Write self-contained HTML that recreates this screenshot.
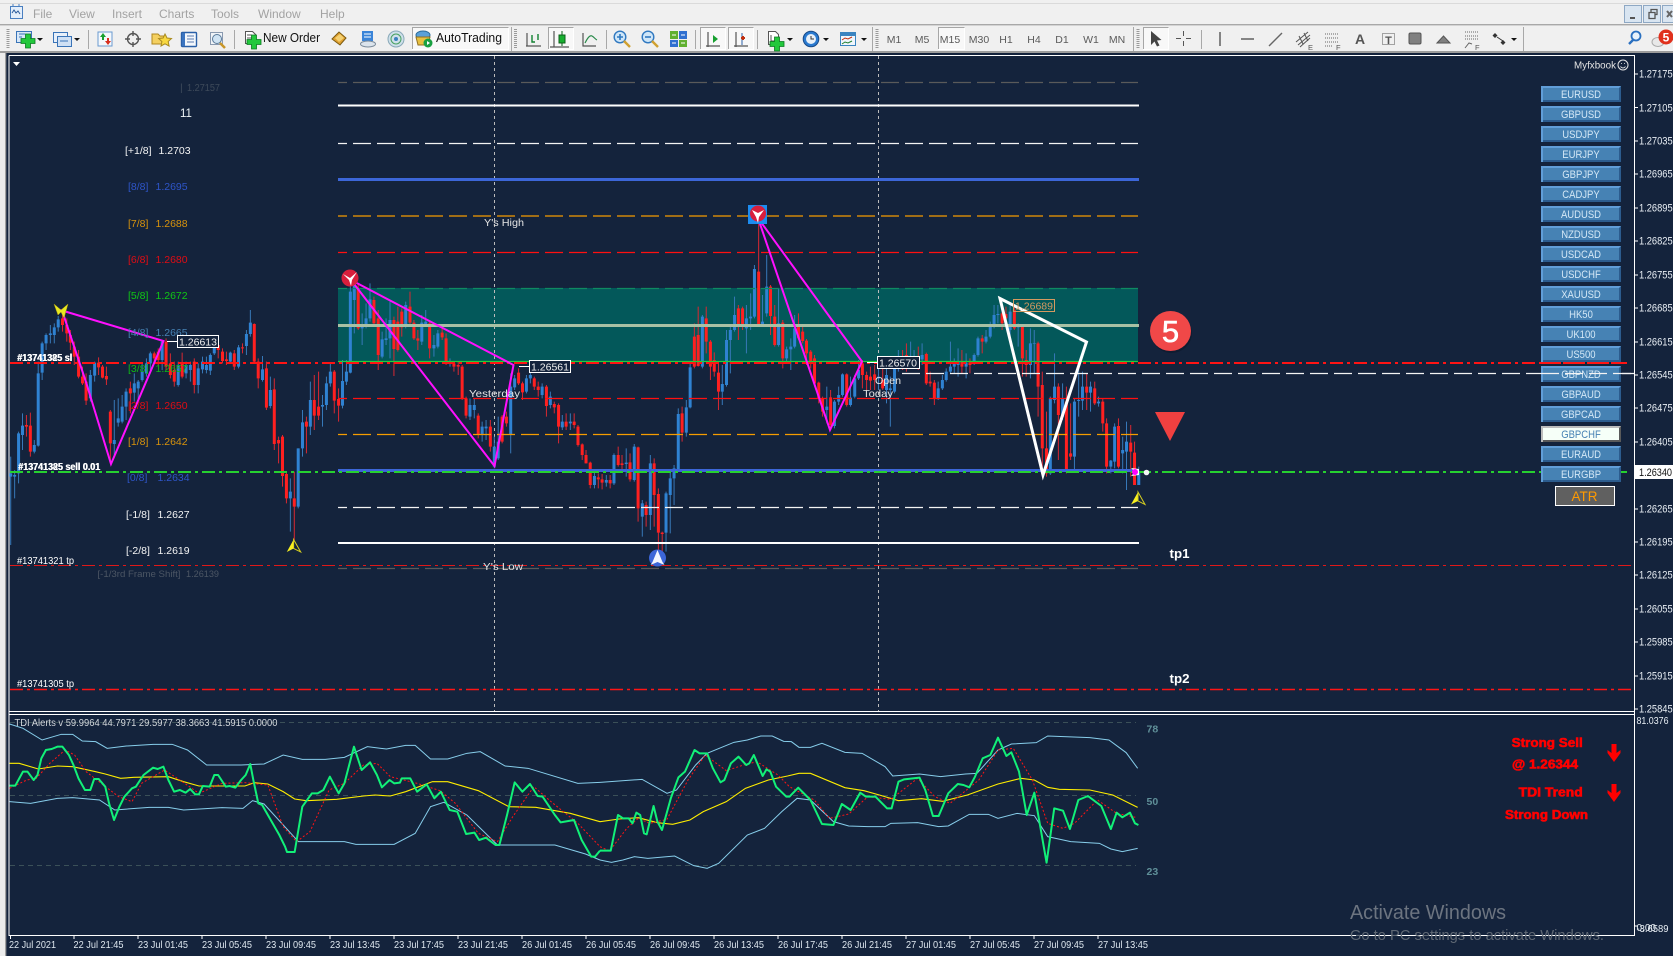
<!DOCTYPE html>
<html lang="en"><head><meta charset="utf-8"><title>MT4 chart</title>
<style>
html,body{margin:0;padding:0;background:#14233c;width:1673px;height:956px;overflow:hidden}
svg{display:block;font-family:"Liberation Sans",sans-serif}
path,polyline,line{vector-effect:non-scaling-stroke}
.lv{font-size:10.5px}
.px{font-size:10.6px;fill:#e8eef4}
.bt{font-size:10.8px;fill:#d4e8f6;text-anchor:middle}
.tm{font-size:10.5px;fill:#dfe8f0}
.tf{font-size:10.5px;fill:#5a5a5a;text-anchor:middle}
.mn{font-size:12px;fill:#a2a2a2}
.ch{font-size:10.5px;fill:#e4e4e4}
.rd{font-size:12.5px;font-weight:bold;fill:#ff0000;stroke:#ff0000;stroke-width:.6}
</style></head><body>
<svg width="1673" height="956" viewBox="0 0 1673 956" xmlns="http://www.w3.org/2000/svg">
<defs>
<g id="btn"><rect x="1541" y="86" width="80" height="16" fill="#2c5c8e"/><path d="M1541 86H1621L1619 88H1543V102L1541 102Z" fill="#619ed8"/><rect x="1543" y="88" width="76" height="12" fill="#4682b4"/></g>
<g id="plus"><path d="M-2.5-7H2.5V-2.5H7V2.5H2.5V7H-2.5V2.5H-7V-2.5H-2.5Z" fill="#22c83c" stroke="#0a7a20" stroke-width=".8"/></g>
<path id="dn" d="M0 0L6 0L3 3Z" fill="#111"/>
</defs>
<rect width="1673" height="956" fill="#14233c"/>

<!-- window chrome -->
<rect width="1673" height="53" fill="#f0f0f0"/>
<rect y="3" width="1673" height="1" fill="#dadada"/>
<rect y="24" width="1673" height="1.4" fill="#a8a8a8"/>
<rect y="51" width="1673" height="2" fill="#9c9c9c"/>
<rect x="0" y="53" width="5" height="903" fill="#ececec"/>
<rect x="5" y="53" width="1.4" height="903" fill="#a0a0a0"/>

<g fill="none" stroke="#4a7fc0"><rect x="10.500" y="6.500" width="12" height="12" fill="#e4eefa"/><path d="M12 13l2-3 2 3 2-2 2 3" stroke="#2a5a9a"/><path d="M13 6V4M19 6V4"/></g>
<text class="mn" x="33" y="18">File</text><text class="mn" x="69" y="18">View</text><text class="mn" x="112" y="18">Insert</text><text class="mn" x="159" y="18">Charts</text><text class="mn" x="211" y="18">Tools</text><text class="mn" x="258" y="18">Window</text><text class="mn" x="320" y="18">Help</text>

<!-- window buttons -->
<g fill="#d9e5f1" stroke="#8ea8c4"><rect x="1624.500" y="5.500" width="17" height="17"/><rect x="1643.500" y="5.500" width="17" height="17"/><rect x="1662.500" y="5.500" width="12" height="17"/></g>
<path d="M1630 18h5" stroke="#555" stroke-width="2"/>
<path d="M1649 12.500h6v6h-6zM1651 12v-2.500h6v5h-2" fill="none" stroke="#555" stroke-width="1.300"/>
<path d="M1667 11l5 6M1672 11l-5 6" stroke="#666" stroke-width="2"/>

<!-- toolbar -->
<g stroke="#a8a8a8" fill="none">
<path d="M88.500 30V49M234.500 30V49M511.500 27V51M606.500 30V49M695.500 30V49M757.500 30V49M872.500 27V51M1133.500 27V51M1201.500 30V49M1523.500 27V51"/>
</g>
<g stroke="#9a9a9a" stroke-dasharray="1 1" stroke-width="3" fill="none"><path d="M8 29V49M515.500 29V49M877 29V49M1138 29V49"/></g>
<!-- pressed boxes -->
<g fill="#f8f8f8" stroke="none"><rect x="412" y="27" width="97" height="23"/><rect x="548" y="27" width="26" height="23"/><rect x="700" y="27" width="26" height="23"/><rect x="728" y="27" width="26" height="23"/><rect x="938" y="27" width="27" height="23"/><rect x="1143" y="27" width="26" height="23"/></g>
<g fill="none" stroke="#a6a6a6"><path d="M412.500 49V27.500H508.500M548.500 49V27.500H573.500M700.500 49V27.500H725.500M728.500 49V27.500H753.500M938.500 49V27.500H964.500M1143.500 49V27.500H1168.500"/></g>
<g fill="none" stroke="#ffffff"><path d="M412.500 49.500H508.500V28M548.500 49.500H573.500V28M700.500 49.500H725.500V28M728.500 49.500H753.500V28M938.500 49.500H964.500V28M1143.500 49.500H1168.500V28"/></g>

<!-- icon: new chart -->
<rect x="16.500" y="31.500" width="15" height="11" fill="#d8e8f8" stroke="#3a74b8"/><path d="M19 34h6M19 37h3" stroke="#3a74b8"/><use href="#plus" x="28" y="41"/><use href="#dn" x="37" y="38"/>
<!-- profiles -->
<rect x="53.500" y="32.500" width="14" height="10" fill="#e8f0fa" stroke="#3a74b8"/><rect x="57.500" y="36.500" width="14" height="10" fill="#cfe0f4" stroke="#3a74b8"/><path d="M60 41h8" stroke="#3a74b8"/><use href="#dn" x="74" y="38"/>
<!-- market watch -->
<rect x="98" y="32" width="14" height="14" fill="#f4f8fc" stroke="#6a9ad0"/><path d="M103 33l-3 4h2v3h2v-3h2z" fill="#18a030"/><path d="M108 45l3-4h-2v-3h-2v3h-2z" fill="#d83020"/>
<!-- crosshair -->
<g fill="none" stroke="#555" stroke-width="1.400"><circle cx="133" cy="39" r="5.500"/><path d="M133 31v5M133 42v5M125 39h5M136 39h5"/></g>
<!-- navigator -->
<path d="M152 34h6l2 2h6v8h-14z" fill="#f4d060" stroke="#b08820"/><path d="M165 34l2 4 4.500.5-3.300 3 .9 4.500-4.100-2.200-4 2.200.9-4.500-3.300-3 4.500-.5z" fill="#f8d840" stroke="#a88a20"/>
<!-- terminal -->
<rect x="181.500" y="32.500" width="15" height="14" rx="1" fill="#f4f8fc" stroke="#2a60a8" stroke-width="1.400"/><rect x="182" y="33" width="3" height="13" fill="#3a74c0"/><path d="M187 36h7M187 39h7M187 42h7" stroke="#5a7ab0"/>
<!-- tester -->
<rect x="210.500" y="32.500" width="12" height="12" fill="#f0f4f8" stroke="#8a9ab0"/><circle cx="217" cy="39" r="4.500" fill="#d0e4f4" stroke="#5a7a9a"/><path d="M220 43l5 5" stroke="#c8962a" stroke-width="2.500"/>
<!-- new order -->
<path d="M245.500 31.500h7l3 3v9h-10z" fill="#fff" stroke="#555"/><path d="M247 35h5M247 38h6" stroke="#555"/><use href="#plus" x="254" y="42"/>
<text x="263" y="42" font-size="12.500" fill="#111" textLength="57" lengthAdjust="spacingAndGlyphs">New Order</text>
<!-- metaeditor -->
<path d="M332 39l7-7 7 6-6 7z" fill="#e0a030" stroke="#7a5a10"/><path d="M335 38l5-4 4 4-5 4z" fill="#f4d070"/>
<!-- vps -->
<rect x="362" y="31" width="11" height="10" fill="#3a84d8"/><path d="M364 34h7M364 37h7" stroke="#fff"/><ellipse cx="368" cy="44" rx="7.500" ry="3" fill="#dce4ec" stroke="#7a8a9a"/>
<!-- signal -->
<circle cx="396" cy="39" r="8" fill="#cfe0ea" stroke="#88a8b8"/><circle cx="396" cy="39" r="5" fill="none" stroke="#48a060"/><circle cx="396" cy="39" r="2" fill="#3c80c0"/>
<!-- autotrading -->
<ellipse cx="423" cy="35" rx="7" ry="4" fill="#5aa0d8" stroke="#2a6a9a"/><path d="M416 37h14l-2 8h-10z" fill="#e8c040" stroke="#907020"/><circle cx="428" cy="43" r="4.500" fill="#18a040"/><path d="M427 41l3 2-3 2z" fill="#fff"/>
<text x="436" y="42" font-size="12.500" fill="#111" textLength="66" lengthAdjust="spacingAndGlyphs">AutoTrading</text>
<!-- chart types -->
<g fill="none" stroke="#555" stroke-width="1.200"><path d="M527 33v13h13M526 46h15"/><path d="M532 35v7h3M538 40v-6" stroke="#108030" stroke-width="1.400"/>
<path d="M554 31v16M550 47h19"/><path d="M583 33v13h13"/><path d="M585 43c3-6 5-8 7-7s3 3 5 4" stroke="#2a8a4a"/></g>
<rect x="559" y="35" width="6" height="8" fill="#18b030" stroke="#0a6018"/><path d="M562 31v4M562 43v3" stroke="#0a6018"/>
<!-- zoom -->
<circle cx="620" cy="37" r="5.800" fill="#cfe6f8" stroke="#2f78c0" stroke-width="1.400"/><path d="M617 37h6M620 34v6" stroke="#2f78c0" stroke-width="1.600"/><path d="M624 41l6 6" stroke="#d0a030" stroke-width="2.400"/>
<circle cx="648" cy="37" r="5.800" fill="#cfe6f8" stroke="#2f78c0" stroke-width="1.400"/><path d="M645 37h6" stroke="#2f78c0" stroke-width="1.600"/><path d="M652 41l6 6" stroke="#d0a030" stroke-width="2.400"/>
<!-- tile -->
<rect x="670" y="31" width="8" height="8" fill="#60b030"/><rect x="679" y="31" width="8" height="8" fill="#3070d0"/><rect x="670" y="40" width="8" height="7" fill="#3070d0"/><rect x="679" y="40" width="8" height="7" fill="#60b030"/><path d="M672 35h4M681 35h4M672 43h4M681 43h4" stroke="#fff"/>
<!-- autoscroll / shift -->
<g fill="none" stroke="#555" stroke-width="1.200"><path d="M708 32v15M706 46h14M736 32v15M734 46h14"/></g>
<path d="M713 35v8l5-4z" fill="#18a030"/><path d="M742 33v12" stroke="#2a60a8"/><path d="M743 36v4M741 38h4" stroke="#c03010" stroke-width="2"/>
<!-- indicators -->
<path d="M768.500 31.500h7l3 3v10h-10z" fill="#fff" stroke="#555"/><path d="M771 35v6h4" fill="none" stroke="#555"/><use href="#plus" x="777" y="44"/><use href="#dn" x="787" y="38"/>
<!-- clock -->
<circle cx="811" cy="39" r="7.800" fill="#2a7ad0" stroke="#184a88"/><circle cx="811" cy="39" r="5" fill="#e8f0f8"/><path d="M811 36v3h3" stroke="#333" fill="none"/><use href="#dn" x="823" y="38"/>
<!-- template -->
<rect x="840.500" y="32.500" width="15" height="13" fill="#f0f6fc" stroke="#3a84c0"/><rect x="841" y="33" width="14" height="3" fill="#3a84c0"/><path d="M842 40l3-2 3 1 4-2" stroke="#c03010" fill="none"/><path d="M842 44l3-2 3 1 4-2" stroke="#208030" fill="none"/><use href="#dn" x="861" y="38"/>
<!-- timeframes -->
<text class="tf" x="894" y="43">M1</text><text class="tf" x="922" y="43">M5</text><text class="tf" x="950" y="43">M15</text><text class="tf" x="979" y="43">M30</text><text class="tf" x="1006" y="43">H1</text><text class="tf" x="1034" y="43">H4</text><text class="tf" x="1062" y="43">D1</text><text class="tf" x="1091" y="43">W1</text><text class="tf" x="1117" y="43">MN</text>
<!-- drawing tools -->
<path d="M1151 31v14l3.500-3.500 2.500 5 2.500-1-2.500-5 4.500-.5z" fill="#444"/>
<path d="M1183.500 31v5M1183.500 41v5M1176 38.500h5M1186 38.500h5" stroke="#555" fill="none"/>
<path d="M1220 32v14" stroke="#555" stroke-width="1.400"/><path d="M1241 39h13" stroke="#555" stroke-width="1.400"/><path d="M1269 46l13-13" stroke="#666" stroke-width="1.400"/>
<g stroke="#555" fill="none"><path d="M1296 42l12-10M1298 45l12-10M1300 47l10-9M1299 36l4 8M1304 33l4 8"/></g><text x="1308" y="50" font-size="7.500" fill="#555">E</text>
<path d="M1325 34h14M1325 38h14M1325 42h14M1325 46h8" stroke="#666" stroke-dasharray="1 1" fill="none"/><text x="1336" y="50" font-size="7.500" fill="#555">F</text>
<text x="1360" y="44" font-size="14" font-weight="bold" fill="#555" text-anchor="middle">A</text>
<rect x="1382.500" y="33.500" width="12" height="11" fill="none" stroke="#555" stroke-dasharray="1 1"/><text x="1388.500" y="44" font-size="11" font-weight="bold" fill="#555" text-anchor="middle">T</text>
<rect x="1409" y="33" width="12" height="11" rx="1.500" fill="#808080" stroke="#555"/>
<path d="M1437 43l6.500-7 6.500 7z" fill="#808080" stroke="#555"/>
<path d="M1465 32h14M1465 36h14M1465 39h14" stroke="#666" stroke-dasharray="1 1" fill="none"/><path d="M1465 48l4-5 3 1" stroke="#666" fill="none"/><text x="1475" y="50" font-size="7.500" fill="#555">F</text>
<path d="M1495 33l2.500 2.500-2.500 2.500-2.500-2.500zM1503 40l2.500 2.500-2.500 2.500-2.500-2.500z" fill="#333"/><path d="M1497 37l6 4" stroke="#333"/><use href="#dn" x="1511" y="38"/>
<!-- search + badge -->
<circle cx="1636" cy="36" r="4.500" fill="#e8f2fb" stroke="#2a70c0" stroke-width="1.800"/><path d="M1633 40l-4 4" stroke="#2a70c0" stroke-width="2.400"/>
<ellipse cx="1658" cy="42" rx="6" ry="4.500" fill="#e8e8e8" stroke="#aaa"/><circle cx="1666" cy="37" r="7.500" fill="#e0301c"/><text x="1666" y="41.500" font-size="12" font-weight="bold" fill="#fff" text-anchor="middle">5</text>

<!-- chart frame -->
<rect x="9" y="53" width="1664" height="903" fill="#14233c"/>
<rect x="6.400" y="53" width="2.600" height="903" fill="#14233c"/>
<path d="M9 55.500H1634.500V935.500H9V55.500M9 711.500H1634M9 714.500H1634" fill="none" stroke="#fff" stroke-width="1"/>
<path d="M13 62h7l-3.500 4z" fill="#fff"/>

<!-- green box -->
<rect x="338" y="288" width="800" height="74" fill="#03585a"/>

<!-- vertical separators -->
<path d="M494.500 56V711M878.500 56V711" stroke="#bcbcbc" stroke-dasharray="3 3" fill="none"/>

<!-- candles left part -->
<g transform="translate(0,250) scale(.35714,.33333)" fill="none">
<path stroke="#3778b8" stroke-width="1" d="M30 620V885M41 660V745M52 545V700M63 490V600M96 570V610M107 335V590M118 275V390M129 250V300M141 225V280M152 220V280M163 198V245M253 360V455M265 335V395M320 450V620M331 445V530M342 435V520M353 415V510M376 370V455M387 390V450M398 340V395M410 325V380M421 305V360M454 270V360M499 335V410M521 335V385M533 335V395M555 340V430M567 320V370M578 320V370M589 310V375M600 265V315M645 305V340M668 285V355M690 240V315M701 180V260M735 318V395M757 380V475M813 685V845M835 595V775M847 480V620M869 395V555M903 435V530M914 380V480M925 340V410M959 330V475M970 330V405M981 100V370M992 100V250M1014 190V285M1025 160V235M1036 100V215M1070 245V325M1081 205V285M1092 155V325M1136 155V235M1181 195V285M1192 180V230M1215 255V320M1226 240V295M1260 325V350M1316 445V510M1328 445V505M1350 515V575M1361 510V570M1384 560V655M1395 500V630M1430 370V610M1441 375V420M1474 375V430M1485 365V400M1518 400V445M1541 425V475"/>
<path stroke="#d82832" stroke-width="1" d="M74 495V560M85 488V620M175 180V245M187 205V275M197 240V300M208 275V345M220 300V385M231 350V405M241 370V465M276 322V375M287 345V385M298 350V405M309 480V640M365 395V490M432 305V335M443 295V345M465 265V360M477 310V385M488 335V410M510 308V385M544 325V430M611 270V325M623 295V340M634 305V345M656 300V360M679 280V310M712 220V340M723 325V415M746 335V480M768 385V600M780 560V640M791 555V710M802 665V760M824 665V870M858 500V610M880 375V540M892 365V510M936 360V490M948 415V515M1003 100V240M1047 140V225M1059 180V360M1103 200V378M1114 170V305M1125 175V260M1148 125V225M1159 210V270M1170 240V300M1203 215V325M1238 235V270M1249 250V345M1271 335V365M1283 335V375M1294 345V450M1305 440V505M1339 490V565M1373 510V605M1406 495V580M1418 485V530M1452 355V405M1463 395V450M1496 380V420M1507 395V440M1530 405V500M1552 455V490M1564 460V580"/>
<path stroke="#2f82d2" stroke-width="3" d="M30 670V680M41 675V680M52 550V670M63 527V555M96 585V605M107 370V587M118 280V368M129 255V280M141 250V255M152 232V255M163 208V232M253 375V445M265 338V377M320 570V582M331 505V518M342 470V515M353 425V470M376 400V428M387 395V415M398 365V390M410 340V370M421 310V340M454 275V330M499 345V405M521 345V370M533 345V360M555 355V405M567 335V358M578 345V360M589 315V362M600 290V310M645 308V335M668 292V350M690 252V288M701 218V252M735 358V390M757 420V468M813 725V745M835 595V770M847 517V595M869 450V530M903 465V470M914 400V465M925 365V400M959 393V467M970 365V395M981 125V368M992 100V150M1014 225V235M1025 205V230M1036 148V205M1070 268V320M1081 265V270M1092 210V265M1136 165V230M1181 218V275M1192 215V222M1215 285V295M1226 250V290M1260 335V342M1316 465V500M1328 465V480M1350 530V555M1361 530V535M1384 590V650M1395 575V625M1430 410V555M1441 385V412M1474 385V425M1485 375V385M1518 410V435M1541 440V465"/>
<path stroke="#ff2020" stroke-width="3" d="M74 525V530M85 527V605M175 205V225M187 225V250M197 255V278M208 290V320M220 320V380M231 380V400M241 395V452M276 338V352M287 350V383M298 378V388M309 485V580M365 415V430M432 310V325M443 305V330M465 275V350M477 340V375M488 360V395M510 340V380M544 335V405M611 285V300M623 305V333M634 328V333M656 310V350M679 292V295M712 222V335M723 335V385M746 355V473M768 418V582M780 570V580M791 560V678M802 672V745M824 745V770M858 515V530M880 450V497M892 470V497M936 365V452M948 447V467M1003 115V235M1047 150V220M1059 205V315M1103 210V297M1114 215V300M1125 185V232M1148 170V218M1159 218V265M1170 265V272M1203 220V295M1238 248V262M1249 265V340M1271 340V350M1283 345V350M1294 350V445M1305 445V497M1339 497V555M1373 530V590M1406 500V575M1418 500V520M1452 368V400M1463 400V427M1496 385V410M1507 410V420M1530 410V468M1552 462V472M1564 465V530"/>
</g>

<!-- candles right part -->
<g transform="translate(560,190) scale(.38277,.33333)" fill="none">
<path stroke="#3778b8" stroke-width="1" d="M6 675V720M27 670V720M90 845V895M121 855V890M141 790V885M173 775V860M194 762V875M215 930V1040M236 795V1020M277 905V1085M288 840V1030M298 825V945M309 655V840M330 630V740M340 520V655M372 375V535M424 525V645M435 420V590M445 410V550M456 320V425M487 345V490M498 310V420M508 225V385M529 315V410M540 195V380M571 295V470M592 470V520M603 445V540M613 375V475M697 590V700M717 630V715M728 590V645M738 550V620M759 560V650M770 555V625M780 510V570M832 520V600M853 520V640M863 560V710M874 520V610M884 480V545M916 455V530M925 480V530M946 460V525M988 575V630M999 555V600M1009 535V575M1020 455V550M1030 505V550M1040 475V560M1061 490V565M1082 490V525M1092 440V500M1113 420V460M1124 395V445M1134 345V415M1144 345V400M1176 345V440M1197 400V470M1229 415V565M1239 420V550M1281 620V855M1292 490V640M1313 580V690M1344 625V840M1355 515V680M1365 545V660M1386 575V665M1407 620V650M1439 810V850M1449 700V835M1470 740V850M1480 695V900M1512 830V885"/>
<path stroke="#d82832" stroke-width="1" d="M16 670V720M37 670V715M47 705V770M58 760V810M68 780V820M79 815V895M100 850V895M110 852V898M131 855V895M152 770V830M162 795V840M183 790V875M204 770V995M225 935V1010M246 805V1010M257 895V1105M267 1025V1110M319 650V755M351 400V535M361 350V530M382 350V490M393 450V570M403 487V560M414 515V660M466 345V450M477 350V420M519 95V410M550 285V435M561 345V470M582 390V535M623 370V450M634 405V460M644 447V525M655 480V535M665 495V590M676 575V640M686 620V680M707 600V720M749 550V650M790 510V595M801 545V600M811 530V600M822 525V600M843 510V600M895 480V540M905 460V545M936 470V540M957 488V585M967 545V590M978 570V645M1050 480V550M1071 505V550M1103 435V490M1155 350V420M1165 350V395M1187 350V420M1208 405V560M1218 480V560M1249 455V680M1260 545V840M1271 665V860M1302 580V810M1323 590V850M1334 640V810M1376 550V660M1397 575V645M1418 625V725M1428 685V850M1459 685V835M1491 705V860M1501 755V885"/>
<path stroke="#2f82d2" stroke-width="3" d="M6 695V712M27 695V700M90 858V885M121 870V878M141 795V880M173 818V822M194 770V870M215 940V980M236 820V975M277 910V1028M288 865V915M298 835V865M309 672V838M330 652V728M340 532V652M372 380V530M424 582V605M435 450V585M445 420V450M456 375V420M487 385V415M498 380V385M508 237V380M529 395V405M540 290V370M571 400V465M592 478V505M603 470V478M613 415V470M697 650V660M717 635V708M728 615V635M738 553V615M759 623V645M770 565V620M780 540V565M832 560V565M853 555V600M863 595V600M874 530V605M884 525V530M916 505V510M925 505V510M946 495V508M988 595V625M999 570V595M1009 545V570M1020 530V545M1030 520V530M1040 515V525M1061 518V530M1082 495V520M1092 445V495M1113 440V455M1124 408V440M1134 375V410M1144 372V375M1176 365V420M1197 408V412M1229 460V525M1239 460V462M1281 625V850M1292 590V630M1313 625V680M1344 635V800M1355 630V633M1365 590V632M1386 590V608M1407 635V640M1439 812V830M1449 710V815M1470 780V790M1480 755V785M1512 845V885"/>
<path stroke="#ff2020" stroke-width="3" d="M16 695V710M37 695V705M47 710V765M58 763V795M68 795V820M79 818V885M100 862V868M110 868V878M131 870V880M152 795V825M162 820V825M183 817V868M204 772V955M225 945V975M246 820V915M257 912V1028M267 1028V1032M319 670V728M351 440V530M361 435V528M382 385V455M393 455V530M403 510V545M414 548V605M466 355V410M477 355V410M519 245V405M550 290V378M561 380V465M582 398V505M623 405V445M634 425V453M644 452V490M655 485V515M665 505V580M676 578V625M686 625V665M707 622V705M749 553V645M790 520V555M801 555V570M811 560V572M822 553V570M843 570V595M895 520V530M905 495V525M936 500V508M957 492V580M967 575V580M978 578V625M1050 515V530M1071 517V525M1103 445V455M1155 370V400M1165 372V385M1187 360V415M1208 410V505M1218 510V525M1249 460V590M1260 585V775M1271 775V850M1302 590V675M1323 635V845M1334 790V800M1376 590V608M1397 595V640M1418 635V700M1428 700V830M1459 708V830M1491 758V785M1501 788V885"/>
</g>

<!-- level lines -->
<g fill="none" stroke-dasharray="18 6" stroke-dashoffset="9" stroke-width="1.200">
<path d="M338 82.500H1138" stroke="#5a5a5a"/>
<path d="M338 143.500H1138" stroke="#f4f4f4"/>
<path d="M338 216H1138" stroke="#f59c00"/>
<path d="M338 252.500H1138" stroke="#ff1010"/>
<path d="M338 398.500H1138" stroke="#ff1010"/>
<path d="M338 434.500H1138" stroke="#f59c00"/>
<path d="M338 507.500H1138" stroke="#f4f4f4"/>
<path d="M338 568.500H1138" stroke="#5a5a5a"/>
<path d="M338 288.500H1138" stroke="#0f8a62"/>
</g>
<path d="M338 105.500H1139" stroke="#fff" stroke-width="2"/>
<path d="M338 179.500H1139" stroke="#3c66d8" stroke-width="3"/>
<path d="M338 325.500H1139" stroke="#a8c0a4" stroke-width="3"/>
<path d="M338 361.500H1138" stroke="#22d03a" stroke-width="1.200"/>
<path d="M338 470.500H1139" stroke="#3c66d8" stroke-width="3"/>
<path d="M338 543H1139" stroke="#fff" stroke-width="2"/>
<path d="M902 373.500H1634" stroke="#f4f4f4" stroke-width="1.200" stroke-dasharray="18 6"/>
<path d="M10 363H1627" stroke="#ff1414" stroke-width="2" stroke-dasharray="13 4 3 4"/>
<path d="M10 472H1627" stroke="#26d030" stroke-width="2" stroke-dasharray="13 4 3 4"/>
<path d="M10 565.500H1634" stroke="#e01818" stroke-width="1" stroke-dasharray="13 4 3 4"/>
<path d="M10 689.500H1634" stroke="#ff1414" stroke-width="1.400" stroke-dasharray="13 4 3 4"/>

<!-- harmonic patterns -->
<g fill="none" stroke="#ff10ff" stroke-width="2">
<path d="M62 310.500L163.500 341L111 464L86 382Z"/>
<path d="M351 280L513.500 365L494.500 466Z"/>
<path d="M758 218L862 361.500L830 430Z"/>
</g>
<path d="M1000 298.500L1086.500 342L1043 475Z" fill="none" stroke="#fff" stroke-width="3"/>

<!-- markers -->
<path d="M54 304l7 6 7-6-4 14-3-6-3 3z" fill="#e8e820" stroke="#b0a010" stroke-width=".5"/>
<g><path d="M293.600 539.500L286.800 552L293.600 548.500Z" fill="#f8f020"/><path d="M293.600 539.500L300.700 552L293.600 548.500Z" fill="none" stroke="#d8d020"/></g>
<g><path d="M1138 492L1131 504.500L1138 501Z" fill="#f8f020"/><path d="M1138 492L1145 504.500L1138 501Z" fill="none" stroke="#d8d020"/></g>
<circle cx="350" cy="278" r="8.500" fill="#d81e3c"/><path d="M343 274l7 4 7-6-5 8-1 6-2-6z" fill="#fff"/>
<rect x="748" y="205" width="19" height="19" fill="#1c8cf0"/><circle cx="758" cy="213.500" r="8" fill="#d81e3c"/><path d="M752 210l6 3 6-3-5 7-1 6-2-6z" fill="#fff"/>
<circle cx="657.500" cy="558" r="8.500" fill="#3c66d8"/><path d="M657.500 550l5 12 2 3-7-3-7 3 2-3z" fill="#f2f6ff"/>
<path d="M1131 468l4 4-4 4 8-1v-6z" fill="#fff"/><circle cx="1135" cy="472" r="3" fill="#ff00ff"/>
<circle cx="1146.500" cy="472.500" r="2.800" fill="#f4f4f4"/>

<!-- left labels -->
<g class="lv">
<text x="180" y="91" fill="#3e4a5a">|</text><text x="187" y="91" fill="#3e4a5a" font-size="10" textLength="33" lengthAdjust="spacingAndGlyphs">1.27157</text>
<text x="180" y="117" fill="#f0f6f8" font-size="11.500">11</text>
<text x="125" y="154" fill="#f4f4f4">[+1/8]</text><text x="158.500" y="154" fill="#f4f4f4">1.2703</text>
<text x="128" y="190" fill="#2e55c8">[8/8]</text><text x="155.500" y="190" fill="#2e55c8">1.2695</text>
<text x="128" y="227" fill="#d8930c">[7/8]</text><text x="155.500" y="227" fill="#d8930c">1.2688</text>
<text x="128" y="263" fill="#e00c14">[6/8]</text><text x="155.500" y="263" fill="#e00c14">1.2680</text>
<text x="128" y="299" fill="#10c814">[5/8]</text><text x="155.500" y="299" fill="#10c814">1.2672</text>
<text x="128" y="336" fill="#4682b4">[4/8]</text><text x="155.500" y="336" fill="#4682b4">1.2665</text>
<text x="128" y="372" fill="#10b814">[3/8]</text><text x="155.500" y="372" fill="#10b814">1.2657</text>
<text x="128" y="409" fill="#e00c14">[2/8]</text><text x="155.500" y="409" fill="#e00c14">1.2650</text>
<text x="128" y="445" fill="#d8930c">[1/8]</text><text x="155.500" y="445" fill="#d8930c">1.2642</text>
<text x="127" y="481" fill="#2e55c8">[0/8]</text><text x="157.500" y="481" fill="#2e55c8">1.2634</text>
<text x="126" y="518" fill="#f4f4f4">[-1/8]</text><text x="157.500" y="518" fill="#f4f4f4">1.2627</text>
<text x="126" y="554" fill="#f4f4f4">[-2/8]</text><text x="157.500" y="554" fill="#f4f4f4">1.2619</text>
</g>
<text x="97.500" y="577" font-size="9.500" fill="#4c5664" textLength="83" lengthAdjust="spacingAndGlyphs">[-1/3rd Frame Shift]</text><text x="186" y="577" font-size="9.500" fill="#4c5664" textLength="33" lengthAdjust="spacingAndGlyphs">1.26139</text>

<g font-size="10.400" fill="#fff">
<text x="17" y="361" font-weight="bold" textLength="55" lengthAdjust="spacingAndGlyphs">#13741385 sl</text><text x="17.500" y="361" font-weight="bold" textLength="55" lengthAdjust="spacingAndGlyphs">#13741325 sl</text>
<text x="18" y="470" font-weight="bold" textLength="82" lengthAdjust="spacingAndGlyphs">#13741385 sell 0.01</text><text x="18.500" y="470" font-weight="bold" textLength="82" lengthAdjust="spacingAndGlyphs">#13741325 sell 0.01</text>
<text x="17" y="564" textLength="57" lengthAdjust="spacingAndGlyphs">#13741321 tp</text>
<text x="17" y="687" textLength="57" lengthAdjust="spacingAndGlyphs">#13741305 tp</text>
</g>

<!-- price boxes -->
<g fill="#14233c" stroke="#fff"><rect x="177.500" y="335.500" width="41" height="12"/><rect x="529.500" y="360.500" width="41" height="12"/><rect x="877.500" y="356.500" width="42" height="12"/></g>
<path d="M167 341.500h10M519 366.500h10M867 362.500h10" stroke="#fff"/>
<rect x="1013.500" y="299.500" width="41" height="12" fill="none" stroke="#d49a60"/>
<g class="ch"><text x="179" y="345.500" textLength="38" lengthAdjust="spacingAndGlyphs" fill="#f0f0f0">1.26613</text><text x="531" y="370.500" textLength="38" lengthAdjust="spacingAndGlyphs" fill="#f0f0f0">1.26561</text><text x="879" y="366.500" textLength="38" lengthAdjust="spacingAndGlyphs" fill="#f0f0f0">1.26570</text><text x="1015" y="309.500" textLength="38" lengthAdjust="spacingAndGlyphs" fill="#d49a60">1.26689</text></g>

<text class="ch" x="484" y="226" textLength="40" lengthAdjust="spacingAndGlyphs">Y's High</text>
<text class="ch" x="483" y="570" textLength="40" lengthAdjust="spacingAndGlyphs">Y's Low</text>
<text class="ch" x="469" y="397" textLength="51" lengthAdjust="spacingAndGlyphs">Yesterday</text>
<text class="ch" x="875" y="384" textLength="26" lengthAdjust="spacingAndGlyphs">Open</text>
<text class="ch" x="863" y="397" textLength="30" lengthAdjust="spacingAndGlyphs">Today</text>

<text x="1169.500" y="558" font-size="13" font-weight="bold" fill="#fff" textLength="20" lengthAdjust="spacingAndGlyphs">tp1</text>
<text x="1169.500" y="683" font-size="13" font-weight="bold" fill="#fff" textLength="20" lengthAdjust="spacingAndGlyphs">tp2</text>

<!-- big 5 and triangle -->
<ellipse cx="1171.500" cy="333" rx="20.500" ry="20" fill="#0a1424" opacity=".45"/>
<ellipse cx="1170.500" cy="331" rx="20.500" ry="20" fill="#f04848"/>
<text x="1170.500" y="342" font-size="31" fill="#fff" text-anchor="middle" stroke="#fff" stroke-width=".6">5</text>
<path d="M1155 412H1185L1170 441Z" fill="#f04040"/>

<!-- Myfxbook -->
<text x="1574" y="68.500" font-size="10.500" fill="#e4e4e4" textLength="42" lengthAdjust="spacingAndGlyphs">Myfxbook</text>
<circle cx="1623" cy="65" r="5" fill="none" stroke="#e4e4e4"/><path d="M1620.500 66.500c1.500 2 3.500 2 5 0M1621 63.500h.8M1624.200 63.500h.8" fill="none" stroke="#e4e4e4"/>

<!-- symbol buttons -->
<use href="#btn"/><use href="#btn" y="20"/><use href="#btn" y="40"/><use href="#btn" y="60"/><use href="#btn" y="80"/><use href="#btn" y="100"/><use href="#btn" y="120"/><use href="#btn" y="140"/><use href="#btn" y="160"/><use href="#btn" y="180"/><use href="#btn" y="200"/><use href="#btn" y="220"/><use href="#btn" y="240"/><use href="#btn" y="260"/><use href="#btn" y="280"/><use href="#btn" y="300"/><use href="#btn" y="320"/>
<rect x="1541" y="426" width="80" height="16" fill="#5a5a5a"/><path d="M1541 426H1621L1619 428H1543V442L1541 442Z" fill="#bcbcbc"/><rect x="1543" y="428" width="76" height="12" fill="#f6fff8"/>
<use href="#btn" y="360"/><use href="#btn" y="380"/>
<g transform="translate(189.720,0) scale(.88,1)">
<text class="bt" x="1581" y="98">EURUSD</text><text class="bt" x="1581" y="118">GBPUSD</text><text class="bt" x="1581" y="138">USDJPY</text><text class="bt" x="1581" y="158">EURJPY</text><text class="bt" x="1581" y="178">GBPJPY</text><text class="bt" x="1581" y="198">CADJPY</text><text class="bt" x="1581" y="218">AUDUSD</text><text class="bt" x="1581" y="238">NZDUSD</text><text class="bt" x="1581" y="258">USDCAD</text><text class="bt" x="1581" y="278">USDCHF</text><text class="bt" x="1581" y="298">XAUUSD</text><text class="bt" x="1581" y="318">HK50</text><text class="bt" x="1581" y="338">UK100</text><text class="bt" x="1581" y="358">US500</text><text class="bt" x="1581" y="378">GBPNZD</text><text class="bt" x="1581" y="398">GBPAUD</text><text class="bt" x="1581" y="418">GBPCAD</text><text class="bt" x="1581" y="438" style="fill:#4682b4">GBPCHF</text><text class="bt" x="1581" y="458">EURAUD</text><text class="bt" x="1581" y="478">EURGBP</text>
</g>
<path d="M1541 373.500H1634" stroke="#f4f4f4" stroke-width="1.200" stroke-dasharray="18 6" fill="none"/>
<path d="M1541 363H1627" stroke="#ff1414" stroke-width="2" stroke-dasharray="13 4 3 4" fill="none"/>
<rect x="1555.500" y="486.500" width="59" height="19" fill="#606060" stroke="#fff"/>
<text x="1584.500" y="501" font-size="13.500" fill="#ff9a00" text-anchor="middle">ATR</text>

<!-- price axis -->
<g stroke="#fff"><path d="M1634 74h4M1634 107.500h4M1634 141h4M1634 174h4M1634 208h4M1634 241h4M1634 275h4M1634 308h4M1634 342h4M1634 375h4M1634 408h4M1634 442h4M1634 509h4M1634 542h4M1634 575h4M1634 609h4M1634 642h4M1634 676h4M1634 709h4M1634 926h4"/></g>
<g transform="translate(196.680,0) scale(.88,1)">
<text class="px" x="1639" y="77.500">1.27175</text><text class="px" x="1639" y="111.500">1.27105</text><text class="px" x="1639" y="144.500">1.27035</text><text class="px" x="1639" y="177.500">1.26965</text><text class="px" x="1639" y="211.500">1.26895</text><text class="px" x="1639" y="244.500">1.26825</text><text class="px" x="1639" y="278.500">1.26755</text><text class="px" x="1639" y="311.500">1.26685</text><text class="px" x="1639" y="345.500">1.26615</text><text class="px" x="1639" y="378.500">1.26545</text><text class="px" x="1639" y="411.500">1.26475</text><text class="px" x="1639" y="445.500">1.26405</text><text class="px" x="1639" y="512.500">1.26265</text><text class="px" x="1639" y="545.500">1.26195</text><text class="px" x="1639" y="578.500">1.26125</text><text class="px" x="1639" y="612.500">1.26055</text><text class="px" x="1639" y="645.500">1.25985</text><text class="px" x="1639" y="679.500">1.25915</text><text class="px" x="1639" y="712.500">1.25845</text>
</g>
<rect x="1634" y="465" width="39" height="14" fill="#fff"/><text x="1639" y="476" font-size="10.600" fill="#111" textLength="33" lengthAdjust="spacingAndGlyphs">1.26340</text>

<!-- TDI window -->
<path d="M10 722.500H1136M10 795.500H1136M10 865.500H1136" stroke="#3b5058" stroke-dasharray="5 4" fill="none"/>
<g transform="translate(0,700) scale(.38267,.33333)" fill="none">
<polyline stroke="#87ceeb" stroke-width="1" points="25,72 60,85 110,120 160,103 190,103 215,123 250,125 280,145 330,138 400,133 450,133 490,150 540,195 630,195 690,192 740,165 790,178 850,178 900,172 960,140 1010,147 1060,136 1085,136 1125,177 1170,177 1220,160 1255,155 1320,198 1380,205 1510,250 1568,247"/>
<polyline stroke="#87ceeb" stroke-width="1" points="25,305 80,310 150,295 190,293 260,300 300,330 390,322 440,322 480,330 580,323 635,325 660,302 690,312 780,425 900,425 930,433 1030,433 1085,400 1125,320 1160,307 1220,345 1300,435 1380,435 1450,435 1530,462 1568,480"/>
<polyline stroke="#ffee00" stroke-width="1.100" points="25,190 50,190 100,207 150,198 190,200 250,215 275,222 315,235 350,232 440,230 480,245 520,258 580,258 640,258 665,248 700,252 740,275 770,297 800,302 880,298 950,288 980,285 1020,288 1060,275 1130,245 1170,245 1250,272 1330,320 1400,322 1490,340 1568,365"/>
<polyline stroke="#ff1414" stroke-width="1" stroke-dasharray="2 2" points="25,265 70,240 95,235 130,190 170,150 195,165 225,215 270,255 310,290 345,305 370,250 430,210 470,240 520,280 580,250 640,248 700,255 740,380 775,425 810,395 860,270 900,250 950,195 985,190 1020,230 1090,250 1150,272 1190,310 1250,400 1300,425 1340,350 1395,260 1440,305 1510,370 1568,440"/>
<polyline stroke="#12f078" stroke-width="2" stroke-linejoin="round" points="25,257 40,257 60,215 72,215 88,240 98,225 108,175 120,150 135,147 150,140 163,140 180,165 192,195 205,235 222,270 236,270 246,237 258,237 275,260 285,310 298,360 312,320 325,290 345,265 355,260 375,225 400,203 412,207 427,200 440,240 455,275 470,270 485,278 497,267 510,283 520,283 530,258 548,260 560,225 570,225 590,260 600,258 615,263 630,240 642,225 654,192 662,240 675,310 685,315 715,375 730,405 745,440 750,456 770,456 790,320 815,280 830,280 845,270 862,230 885,280 900,250 925,140 945,210 967,187 985,225 998,262 1018,240 1030,250 1045,248 1050,235 1072,235 1090,275 1115,253 1135,295 1152,275 1175,330 1195,335 1218,402 1240,398 1252,420 1270,413 1295,435 1305,435 1325,345 1345,247 1365,275 1385,252 1405,288 1418,290 1450,345 1465,367 1500,360 1520,420 1545,470 1555,470 1568,452"/>
</g>
<g transform="translate(600,700) scale(.38267,.33333)" fill="none">
<polyline stroke="#87ceeb" stroke-width="1" points="0,247 110,238 175,280 200,270 250,195 280,160 350,127 385,120 420,108 450,108 480,124 500,125 520,142 550,142 580,130 640,157 685,160 745,200 765,228 835,222 890,230 955,222 985,220 1040,150 1075,132 1140,128 1170,108 1280,113 1330,120 1375,158 1405,205"/>
<polyline stroke="#87ceeb" stroke-width="1" points="0,480 30,487 60,480 90,470 125,475 195,468 245,497 280,505 310,490 385,405 430,385 475,335 515,295 550,300 610,365 650,378 700,380 745,380 760,370 830,368 885,380 910,378 965,343 1015,343 1040,355 1090,340 1135,347 1170,410 1230,425 1305,430 1335,447 1365,455 1405,445"/>
<polyline stroke="#ffee00" stroke-width="1.100" points="0,365 50,357 100,353 150,368 190,373 235,360 270,335 330,305 380,265 440,240 490,228 520,220 550,220 640,263 690,272 730,285 780,302 840,296 895,304 960,285 1040,252 1100,235 1135,240 1170,262 1200,268 1280,270 1340,285 1405,322"/>
<polyline stroke="#ff1414" stroke-width="1" stroke-dasharray="2 2" points="0,440 25,453 70,385 100,355 130,370 175,358 230,240 275,165 330,212 375,195 410,185 465,225 495,260 560,300 600,355 650,342 700,290 760,298 830,235 875,290 915,310 990,240 1040,150 1080,145 1130,240 1170,370 1210,385 1240,370 1300,300 1350,340 1400,352"/>
<polyline stroke="#12f078" stroke-width="2" stroke-linejoin="round" points="0,452 28,452 47,345 60,355 75,355 85,370 95,338 105,345 115,400 122,403 140,318 150,365 162,390 185,295 205,232 222,215 247,150 260,160 280,160 295,205 315,247 325,240 342,190 362,170 382,195 390,190 402,165 425,228 435,208 445,215 460,260 487,290 495,290 518,263 550,300 580,372 610,375 632,312 655,330 680,278 695,290 720,290 750,325 762,325 780,245 795,238 835,233 850,270 870,348 885,348 910,280 935,252 950,255 965,262 980,230 1000,175 1020,165 1040,113 1062,168 1075,157 1095,215 1115,345 1135,278 1167,488 1187,325 1210,332 1228,387 1250,300 1275,288 1310,318 1335,387 1350,338 1365,352 1385,338 1398,370 1407,375"/>
</g>
<text x="14.500" y="726" font-size="10.500" fill="#d4d8dc" textLength="263" lengthAdjust="spacingAndGlyphs">TDI Alerts v 59.9964 44.7971 29.5977 38.3663 41.5915 0.0000</text>
<g font-size="10.500" font-weight="bold" fill="#5f8f98"><text x="1146.500" y="732.500">78</text><text x="1146.500" y="805">50</text><text x="1146.500" y="875">23</text></g>

<text class="rd" x="1511.700" y="747" textLength="71" lengthAdjust="spacingAndGlyphs">Strong Sell</text>
<text class="rd" x="1512" y="768.500" textLength="66" lengthAdjust="spacingAndGlyphs">@ 1.26344</text>
<text class="rd" x="1518.700" y="796.500" textLength="64" lengthAdjust="spacingAndGlyphs">TDI Trend</text>
<text class="rd" x="1505" y="819" textLength="83" lengthAdjust="spacingAndGlyphs">Strong Down</text>
<path d="M1611.500 744h5v9l4-3v3l-6.500 9-6.500-9v-3l4 3z" fill="#ff0000"/>
<path d="M1611.500 784h5v9l4-3v3l-6.500 9-6.500-9v-3l4 3z" fill="#ff0000"/>

<text x="1636.500" y="724" font-size="10.500" fill="#e8eef4" textLength="32" lengthAdjust="spacingAndGlyphs">81.0376</text>
<text x="1636.500" y="931" font-size="10" fill="#e8eef4">0.00</text>
<text x="1636.500" y="932" font-size="10" fill="#e8eef4" textLength="32" lengthAdjust="spacingAndGlyphs">-3.6589</text>

<!-- time axis -->
<path d="M10.500 935v4M74 935v4M138 935v4M202 935v4M266 935v4M330 935v4M394 935v4M458 935v4M522 935v4M586 935v4M650 935v4M714 935v4M778 935v4M842 935v4M906 935v4M970 935v4M1034 935v4M1098 935v4" stroke="#fff"/>
<g class="tm">
<text x="9" y="948" textLength="47" lengthAdjust="spacingAndGlyphs">22 Jul 2021</text><text x="73.500" y="948" textLength="50" lengthAdjust="spacingAndGlyphs">22 Jul 21:45</text><text x="138" y="948" textLength="50" lengthAdjust="spacingAndGlyphs">23 Jul 01:45</text><text x="202" y="948" textLength="50" lengthAdjust="spacingAndGlyphs">23 Jul 05:45</text><text x="266" y="948" textLength="50" lengthAdjust="spacingAndGlyphs">23 Jul 09:45</text><text x="330" y="948" textLength="50" lengthAdjust="spacingAndGlyphs">23 Jul 13:45</text><text x="394" y="948" textLength="50" lengthAdjust="spacingAndGlyphs">23 Jul 17:45</text><text x="458" y="948" textLength="50" lengthAdjust="spacingAndGlyphs">23 Jul 21:45</text><text x="522" y="948" textLength="50" lengthAdjust="spacingAndGlyphs">26 Jul 01:45</text><text x="586" y="948" textLength="50" lengthAdjust="spacingAndGlyphs">26 Jul 05:45</text><text x="650" y="948" textLength="50" lengthAdjust="spacingAndGlyphs">26 Jul 09:45</text><text x="714" y="948" textLength="50" lengthAdjust="spacingAndGlyphs">26 Jul 13:45</text><text x="778" y="948" textLength="50" lengthAdjust="spacingAndGlyphs">26 Jul 17:45</text><text x="842" y="948" textLength="50" lengthAdjust="spacingAndGlyphs">26 Jul 21:45</text><text x="906" y="948" textLength="50" lengthAdjust="spacingAndGlyphs">27 Jul 01:45</text><text x="970" y="948" textLength="50" lengthAdjust="spacingAndGlyphs">27 Jul 05:45</text><text x="1034" y="948" textLength="50" lengthAdjust="spacingAndGlyphs">27 Jul 09:45</text><text x="1098" y="948" textLength="50" lengthAdjust="spacingAndGlyphs">27 Jul 13:45</text>
</g>

<!-- activation watermark -->
<text x="1350" y="919" font-size="20.500" fill="#6c7480" textLength="156" lengthAdjust="spacingAndGlyphs">Activate Windows</text>
<text x="1350" y="940" font-size="14.500" fill="#5f6874" textLength="254" lengthAdjust="spacingAndGlyphs">Go to PC settings to activate Windows.</text>
</svg>
</body></html>
